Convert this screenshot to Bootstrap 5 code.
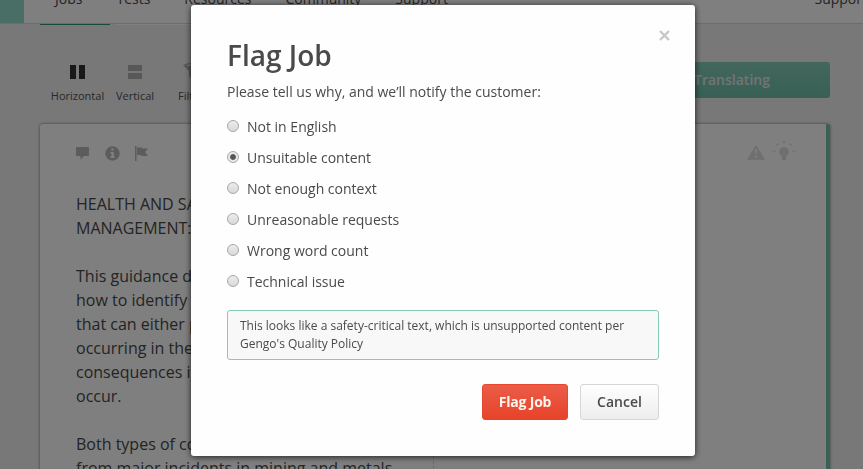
<!DOCTYPE html>
<html lang="en">
<head>
<meta charset="utf-8">
<title>Flag Job</title>
<meta name="viewport" content="width=device-width, initial-scale=1">
<link href="https://cdn.jsdelivr.net/npm/bootstrap@5.3.0/dist/css/bootstrap.min.css" rel="stylesheet">
<style>
html, body { height: 100%; overflow: hidden; }
body { font-family: "Open Sans", "Noto Sans", sans-serif; font-size: 14px; color: #4a4a4a; background: #f0f0f0; }
.page { height: 469px; overflow: hidden; }
.topbar { height: 64px; margin-top: -40px; background: #fff; border-bottom: 1px solid #d8d8d8; }
.brand-block { width: 24px; height: 63px; background: #90dccb; }
.main-links { padding-left: 14px; }
.main-links .nav-link { color: #484848; font-size: 14px; line-height: 20px; padding: 29px 17px 0; height: 63px; }
.account-link { color: #484848; margin-left: auto; margin-right: -4px; padding-top: 29px; line-height: 20px; }
.tab-strip { height: 2px; padding-left: 40px; }
.tab-current { width: 70px; height: 1px; background: #2f9475; }
.tab-rest { width: 85px; height: 1px; margin-left: 5px; background: #fff; }
.toolbar-row { height: 98px; padding: 36px 33px 0 40px; }
.tool { font-size: 11px; line-height: 16px; color: #505050; text-align: center; }
.tool svg { display: block; margin: 3px auto 9px; color: #b0b0b0; }
.tool.active svg { color: #333; }
.tool svg.funnel { margin: 1px auto 9px; }
.tool-h { width: 75px; }
.tool-v { width: 40px; margin-right: 23px; }
.state-btn { width: 200px; height: 36px; background: linear-gradient(#86cebb, #70c1aa); color: #e4e9e8; font-weight: 600; font-size: 14px; border: 0; border-radius: 3px; padding: 0 0 2px 4px; text-align: center; }
.job-panel { margin-left: 40px; width: 790px; height: 420px; background: #fff; border-right: 4px solid #72c3ad; border-radius: 3px; box-shadow: 0 0 3px #777; }
.source-pane { width: 394px; padding: 21px 30px 0 36px; border-right: 1px dashed #d8d8d8; }
.pane-icons { color: #b8b8b8; height: 16px; gap: 14px; }
.source-text { font-size: 16px; line-height: 24px; color: #484848; margin-top: 31px; white-space: nowrap; }
.source-text p { margin-bottom: 24px; }
.target-pane { padding: 17px 31px 0 0; color: #dedede; }
.modal-backdrop { --bs-backdrop-opacity: .5; }
.flag-modal .modal-dialog { width: 504px; max-width: none; margin: 5px 0 0 191px; }
.flag-modal .modal-content { height: 451px; border: 0; border-radius: 3px; padding: 35px 36px 36px; background: #fefefe; color: #4a4a4a; box-shadow: 0 1px 6px rgba(0,0,0,.75); }
.flag-modal .modal-header { height: 32px; border: 0; padding: 0; align-items: flex-start; }
.flag-modal .modal-title { font-size: 28px; font-weight: 600; line-height: 30px; }
.close-x { border: 0; background: none; padding: 0; line-height: 0; color: #c8c8c8; margin: -10px -10.5px 0 0; }
.flag-modal .modal-body { flex: none; padding: 10px 0 0; }
.lead-line { line-height: 20px; margin-bottom: 15px; }
.reason { display: flex; min-height: 20px; line-height: 20px; padding: 0; margin: 0 0 11px; }
.reason .form-check-input { float: none; flex: none; width: 12px; height: 12px; margin: 3px 8px 0 0; border: 1px solid #a8a8a8; background: linear-gradient(#ececec, #d9d9d9); box-shadow: none; }
.reason .form-check-input:checked { background: radial-gradient(circle at center, #555 0 2.4px, #e8e8e8 3.4px); }
.reason-note { height: 50px; margin-top: 18px; padding: 6px 12px; font-size: 12px; line-height: 18px; color: #4a4a4a; background: #f8f8f8; border: 1px solid #86cbb8; border-radius: 3px; overflow: hidden; }
.flag-modal .modal-footer { border: 0; padding: 24px 0 0; gap: 12px; }
.flag-modal .modal-footer > * { margin: 0; }
.act { height: 36px; padding: 0; font-size: 14px; font-weight: 600; line-height: 34px; border-radius: 3px; }
.act-flag { width: 86px; color: #fff4ee; font-weight: 700; letter-spacing: -.2px; border: 1px solid #e5482f; background: linear-gradient(#eb5c47, #e7432a); }
.act-cancel { width: 79px; color: #4a4a4a; border: 1px solid #d6d6d6; background: linear-gradient(#fefefe, #ededed); }
</style>
<script src="https://cdn.jsdelivr.net/npm/bootstrap@5.3.0/dist/js/bootstrap.bundle.min.js"></script>
</head>
<body>
<div class="page">
  <header class="topbar d-flex">
    <div class="brand-block"></div>
    <nav class="nav main-links flex-nowrap">
      <a class="nav-link" href="#">Jobs</a>
      <a class="nav-link" href="#">Tests</a>
      <a class="nav-link" href="#">Resources</a>
      <a class="nav-link" href="#">Community</a>
      <a class="nav-link" href="#">Support</a>
    </nav>
    <div class="account-link">Support</div>
  </header>
  <div class="tab-strip d-flex"><div class="tab-current"></div><div class="tab-rest"></div></div>
  <div class="toolbar-row d-flex align-items-start">
    <div class="tool tool-h active">
      <svg width="15" height="14" fill="currentColor"><path d="M0 0h6v14H0zM9 0h6v14H9z"/></svg>Horizontal
    </div>
    <div class="tool tool-v">
      <svg width="14" height="14" fill="currentColor"><path d="M0 0h14v6H0zM0 8h14v6H0z"/></svg>Vertical
    </div>
    <div class="tool">
      <svg class="funnel" width="15" height="16" viewBox="0 0 15 16" fill="currentColor"><path fill-rule="evenodd" d="M0 2Q7.500-2 15 2L10 8v8l-4-2.500V8zM3 2.200Q7.500 4 12 2.200 7.500.5 3 2.200z"/></svg>Filter
    </div>
    <button class="btn state-btn ms-auto" type="button">Translating</button>
  </div>
  <main class="job-panel d-flex">
    <section class="source-pane">
      <div class="pane-icons d-flex align-items-center">
        <svg width="15" height="14" viewBox="0 0 15 14" fill="currentColor"><path d="M1 1h11q1 0 1 1v7q0 1-1 1H8l-3.500 3.500V10H1Q0 10 0 9V2q0-1 1-1z"/></svg>
        <svg width="15" height="15" viewBox="0 0 15 15"><circle cx="7.500" cy="7.500" r="7.200" fill="currentColor"/><path d="M6.300 2.500h2.400v2H6.300zM5.500 6h3.300v4.600h1v1.500H5.300v-1.500h1.100V7.500h-.9z" fill="#fff"/></svg>
        <svg width="15" height="15" viewBox="0 0 15 15" fill="currentColor"><path d="M1 0h1.500v15H1zM3 1.500h5v1h6L11 6l3 4H7.500V9H3z"/></svg>
      </div>
      <div class="source-text">
        <p>HEALTH AND SAFETY RISK<br>MANAGEMENT:</p>
        <p>This guidance describes<br>how to identify hazards<br>that can either prevent<br>occurring in the workplace<br>consequences if they do<br>occur.</p>
        <p>Both types of controls<br>from major incidents in mining and metals</p>
      </div>
    </section>
    <section class="target-pane flex-grow-1 d-flex justify-content-end align-items-start gap-2">
      <svg class="mt-1" width="18" height="15" viewBox="0 0 18 15"><path d="M9 .7 17.300 14.300H.7z" fill="currentColor" stroke="currentColor" stroke-linejoin="round"/><path d="M8 4h2l-.4 5H8.400zM8 10.500h2v2H8z" fill="#fff"/></svg>
      <svg width="22" height="20" viewBox="0 0 22 20" fill="currentColor"><path d="M11 6a5 5 0 0 1 3.300 8.500L13 16v3H9v-3l-1.300-1.500A5 5 0 0 1 11 6z"/><path d="M11 0v2M3.500 3 5 4.500M18.500 3 17 4.500M0 10.500h2.500M19.500 10.500H22" stroke="currentColor" stroke-width="1.700"/></svg>
    </section>
  </main>
</div>
<div class="modal-backdrop show"></div>
<div class="modal flag-modal d-block" role="dialog" aria-modal="true">
  <div class="modal-dialog">
    <div class="modal-content">
      <div class="modal-header">
        <h1 class="modal-title">Flag Job</h1>
        <button class="close-x" type="button" aria-label="Close"><svg width="11" height="11" viewBox="0 0 11 11" stroke="currentColor" stroke-width="2.400"><path d="M1 1l9 9M10 1l-9 9"/></svg></button>
      </div>
      <div class="modal-body">
        <p class="lead-line">Please tell us why, and we’ll notify the customer:</p>
        <label class="form-check reason"><input class="form-check-input" type="radio" name="reason">Not in English</label>
        <label class="form-check reason"><input class="form-check-input" type="radio" name="reason" checked>Unsuitable content</label>
        <label class="form-check reason"><input class="form-check-input" type="radio" name="reason">Not enough context</label>
        <label class="form-check reason"><input class="form-check-input" type="radio" name="reason">Unreasonable requests</label>
        <label class="form-check reason"><input class="form-check-input" type="radio" name="reason">Wrong word count</label>
        <label class="form-check reason"><input class="form-check-input" type="radio" name="reason">Technical issue</label>
        <div class="form-control reason-note">This looks like a safety-critical text, which is unsupported content per Gengo's Quality Policy</div>
      </div>
      <div class="modal-footer">
        <button class="btn act act-flag" type="button">Flag Job</button>
        <button class="btn act act-cancel" type="button">Cancel</button>
      </div>
    </div>
  </div>
</div>
</body>
</html>
